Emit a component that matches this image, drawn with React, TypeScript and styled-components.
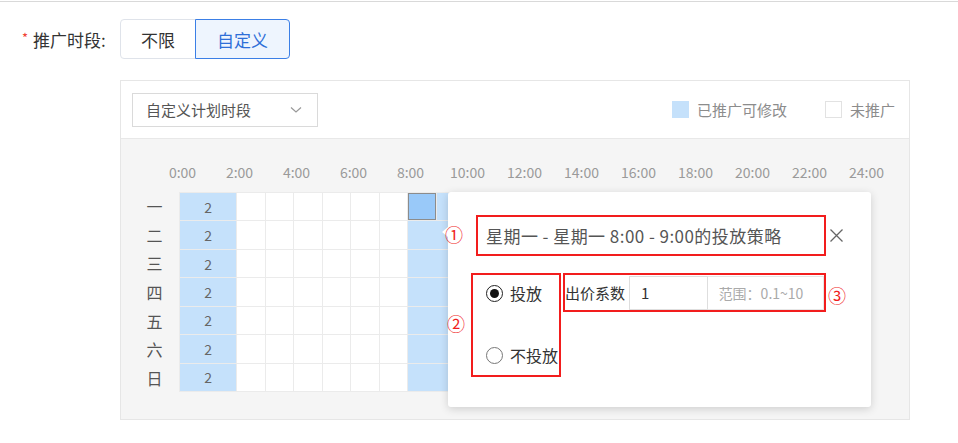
import React from 'react';
import styled, { createGlobalStyle } from 'styled-components';

const Global = createGlobalStyle`
  html, body { margin: 0; padding: 0; background: #fff; }
  body { font-family: "Noto Sans CJK SC", "Noto Sans", sans-serif; color: #333; }
  * { box-sizing: border-box; }
`;

const Page = styled.div`
  width: 958px;
  height: 443px;
  overflow: hidden;
  padding-top: 1px;
`;

const TopLine = styled.div`
  height: 1px;
  background: #d9d9d9;
`;

const FormRow = styled.div`
  display: flex;
  align-items: center;
  margin-top: 17px;
  padding-left: 22px;
`;

const Label = styled.div`
  width: 98px;
  font-size: 17px;
  color: #333;
  display: flex;
  align-items: center;
`;

const Star = styled.span`
  color: #f04134;
  font-size: 13px;
  margin-right: 5px;
  position: relative;
  top: -2px;
`;

const ButtonGroup = styled.div`
  display: flex;
`;

const ToggleButton = styled.div<{ $active?: boolean; $first?: boolean }>`
  height: 40px;
  width: ${p => (p.$first ? '76px' : '95px')};
  display: flex;
  align-items: center;
  justify-content: center;
  font-size: 17px;
  border: 1px solid ${p => (p.$active ? '#3b7fe6' : '#dfe3ea')};
  background: ${p => (p.$active ? '#eef5fe' : '#fff')};
  color: ${p => (p.$active ? '#2e6fd8' : '#333')};
  border-radius: ${p => (p.$first ? '4px 0 0 4px' : '0 4px 4px 0')};
  margin-left: ${p => (p.$first ? '0' : '-1px')};
  position: relative;
  z-index: ${p => (p.$active ? 1 : 0)};
`;

const Panel = styled.div`
  margin: 21px 0 0 120px;
  width: 790px;
  height: 340px;
  border: 1px solid #e6e6e6;
  display: flex;
  flex-direction: column;
`;

const Toolbar = styled.div`
  height: 58px;
  flex: none;
  display: flex;
  align-items: center;
  justify-content: space-between;
  padding: 0 14px 0 11px;
  border-bottom: 1px solid #e8e8e8;
  background: #fff;
`;

const Select = styled.div`
  width: 186px;
  height: 34px;
  border: 1px solid #dadada;
  display: flex;
  align-items: center;
  justify-content: space-between;
  padding: 0 15px 0 13px;
  font-size: 15px;
  color: #555;
`;

const Legend = styled.div`
  display: flex;
  align-items: center;
`;

const LegendItem = styled.div<{ $gap?: number }>`
  display: flex;
  align-items: center;
  margin-left: ${p => p.$gap ?? 0}px;
  font-size: 15px;
  color: #8c8c8c;
`;

const Swatch = styled.span<{ $filled?: boolean }>`
  width: 17px;
  height: 17px;
  margin-right: 8px;
  background: ${p => (p.$filled ? '#c5e1fb' : '#fff')};
  border: 1px solid ${p => (p.$filled ? '#c5e1fb' : '#e2e2e2')};
`;

const Body = styled.div`
  flex: 1;
  background: #f5f5f5;
  position: relative;
  padding: 23px 0 0 0;
`;

const TimeRow = styled.div`
  display: flex;
  padding-left: 33px;
  height: 20px;
`;

const TimeLabel = styled.div`
  width: 57px;
  flex: none;
  text-align: center;
  font-size: 14px;
  line-height: 20px;
  color: #9a9a9a;
`;

const GridRow = styled.div`
  display: flex;
  margin-top: 10px;
`;

const DayCol = styled.div`
  width: 49px;
  margin-left: 9px;
  height: 200px;
  display: grid;
  grid-template-rows: repeat(7, 1fr);
`;

const DayLabel = styled.div`
  display: flex;
  align-items: center;
  justify-content: center;
  font-size: 16px;
  color: #555;
`;

const Grid = styled.div`
  width: 686px;
  height: 200px;
  display: grid;
  grid-template-columns: repeat(24, 1fr);
  grid-template-rows: repeat(7, 1fr);
  gap: 1px;
  background: #ebebeb;
  border: 1px solid #ebebeb;
`;

type Kind = 'empty' | 'on' | 'sel';

const Cell = styled.div<{ $kind: Kind; $span?: number }>`
  grid-column: span ${p => p.$span ?? 1};
  background: ${p => (p.$kind === 'empty' ? '#fff' : p.$kind === 'sel' ? '#99c9f9' : '#c5e1fb')};
  box-shadow: ${p => (p.$kind === 'sel' ? 'inset 0 0 0 1px #8c8c8c' : 'none')};
  display: flex;
  align-items: center;
  justify-content: center;
  font-size: 14px;
  color: #666;
`;

const Popup = styled.div`
  position: absolute;
  left: 327px;
  top: 53px;
  width: 423px;
  height: 215px;
  background: #fff;
  border-radius: 3px;
  box-shadow: 0 2px 8px rgba(0, 0, 0, 0.16);
  padding-top: 23px;
  &::before {
    content: '';
    position: absolute;
    left: -6px;
    top: 35px;
    border-top: 5px solid transparent;
    border-bottom: 5px solid transparent;
    border-right: 6px solid #fff;
  }
`;

const PopHeader = styled.div`
  display: flex;
  align-items: center;
  padding-left: 28px;
`;

const RedBox = styled.div`
  border: 2px solid #f21d1d;
`;

const TitleBox = styled(RedBox)`
  width: 350px;
  height: 41px;
  display: flex;
  align-items: center;
  padding-left: 8px;
  font-size: 17px;
  letter-spacing: 0.45px;
  color: #555;
  white-space: nowrap;
`;

const Close = styled.div`
  margin-left: 4px;
  width: 13px;
  height: 13px;
  display: flex;
`;

const PopBody = styled.div`
  display: flex;
  align-items: flex-start;
  margin-top: 17px;
  padding-left: 23px;
`;

const RadioBox = styled(RedBox)`
  width: 90px;
  height: 104px;
  display: flex;
  flex-direction: column;
  justify-content: space-between;
  padding: 8px 0 10px 13px;
`;

const RadioItem = styled.div`
  display: flex;
  align-items: center;
  height: 20px;
  font-size: 16px;
  color: #333;
`;

const RadioCircle = styled.span<{ $checked?: boolean }>`
  width: 17px;
  height: 17px;
  border-radius: 50%;
  border: 1px solid ${p => (p.$checked ? '#222' : '#777')};
  margin-right: 7px;
  display: flex;
  align-items: center;
  justify-content: center;
  &::after {
    content: '';
    display: ${p => (p.$checked ? 'block' : 'none')};
    width: 9px;
    height: 9px;
    border-radius: 50%;
    background: #111;
  }
`;

const BidBox = styled(RedBox)`
  margin-left: 2px;
  width: 263px;
  height: 39px;
  display: flex;
  align-items: center;
`;

const BidLabel = styled.span`
  font-size: 15px;
  color: #333;
  white-space: nowrap;
`;

const Input = styled.div`
  margin-left: 4px;
  width: 79px;
  height: 34px;
  border: 1px solid #dedede;
  display: flex;
  align-items: center;
  padding-left: 11px;
  font-size: 15px;
  color: #333;
`;

const Addon = styled.div`
  width: 117px;
  height: 34px;
  border: 1px solid #e6e6e6;
  border-left: none;
  display: flex;
  align-items: center;
  padding-left: 11px;
  font-size: 14px;
  color: #aaa;
  white-space: nowrap;
`;

const Annot = styled.span<{ $x: number; $y: number }>`
  position: absolute;
  left: ${p => p.$x}px;
  top: ${p => p.$y}px;
  font-size: 18px;
  line-height: 20px;
  color: #f01e1e;
`;

const days = ['一', '二', '三', '四', '五', '六', '日'];
const times = Array.from({ length: 13 }, (_, i) => `${i * 2}:00`);

function DayCells({ row }: { row: number }) {
  const cells: React.ReactNode[] = [];
  cells.push(
    <Cell key="a" $kind="on" $span={2}>
      2
    </Cell>
  );
  for (let c = 2; c < 8; c++) cells.push(<Cell key={c} $kind="empty" />);
  if (row === 0) {
    cells.push(<Cell key="s" $kind="sel" />);
    cells.push(<Cell key="s2" $kind="on" />);
  } else {
    cells.push(<Cell key="s" $kind="on" $span={2} />);
  }
  for (let c = 10; c < 24; c++) cells.push(<Cell key={c} $kind="empty" />);
  return <>{cells}</>;
}

export default function App() {
  return (
    <Page>
      <Global />
      <TopLine />
      <FormRow>
        <Label>
          <Star>*</Star>推广时段:
        </Label>
        <ButtonGroup>
          <ToggleButton $first>不限</ToggleButton>
          <ToggleButton $active>自定义</ToggleButton>
        </ButtonGroup>
      </FormRow>
      <Panel>
        <Toolbar>
          <Select>
            <span>自定义计划时段</span>
            <svg width="12" height="8" viewBox="0 0 12 8">
              <path d="M1 1.5 L6 6 L11 1.5" fill="none" stroke="#999" strokeWidth="1.2" />
            </svg>
          </Select>
          <Legend>
            <LegendItem>
              <Swatch $filled />
              已推广可修改
            </LegendItem>
            <LegendItem $gap={38}>
              <Swatch />
              未推广
            </LegendItem>
          </Legend>
        </Toolbar>
        <Body>
          <TimeRow>
            {times.map(t => (
              <TimeLabel key={t}>{t}</TimeLabel>
            ))}
          </TimeRow>
          <GridRow>
            <DayCol>
              {days.map(d => (
                <DayLabel key={d}>{d}</DayLabel>
              ))}
            </DayCol>
            <Grid>
              {days.map((d, i) => (
                <DayCells key={d} row={i} />
              ))}
            </Grid>
          </GridRow>
          <Popup>
            <Annot $x={-3} $y={32}>①</Annot>
            <Annot $x={-1} $y={121}>②</Annot>
            <Annot $x={380} $y={93}>③</Annot>
            <PopHeader>
              <TitleBox>星期一 - 星期一 8:00 - 9:00的投放策略</TitleBox>
              <Close>
                <svg width="13" height="13" viewBox="0 0 13 13">
                  <path d="M0.5 0.5 L12.5 12.5 M12.5 0.5 L0.5 12.5" stroke="#666" strokeWidth="1.3" />
                </svg>
              </Close>
            </PopHeader>
            <PopBody>
              <RadioBox>
                <RadioItem>
                  <RadioCircle $checked />
                  投放
                </RadioItem>
                <RadioItem>
                  <RadioCircle />
                  不投放
                </RadioItem>
              </RadioBox>
              <BidBox>
                <BidLabel>出价系数</BidLabel>
                <Input>1</Input>
                <Addon>范围：0.1~10</Addon>
              </BidBox>
            </PopBody>
          </Popup>
        </Body>
      </Panel>
    </Page>
  );
}
